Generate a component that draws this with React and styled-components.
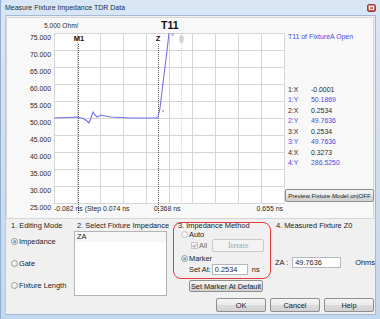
import React from 'react'
import styled, { createGlobalStyle } from 'styled-components'

const GlobalStyle = createGlobalStyle`
  html, body { margin: 0; padding: 0; overflow: hidden; background: #fff; }
  * { box-sizing: border-box; }
`

const ui = `"Liberation Sans", Arial, sans-serif`

const Window = styled.div`
  width: 380px;
  height: 319px;
  display: flex;
  flex-direction: column;
  padding: 0 4px 4px 4px;
  background: linear-gradient(#d9e6f5, #c3d7ee);
  border-left: 1px solid #93aed0;
  font-family: ${ui};
  color: #1b1b1b;
`

const TitleBar = styled.div`
  height: 15px;
  flex: none;
  display: flex;
  align-items: center;
  justify-content: space-between;
  font-size: 7px;
  color: #1e2f45;
`

const CloseButton = styled.div`
  width: 9px;
  height: 8px;
  border: 1px solid #9b3b32;
  border-radius: 2px;
  background: linear-gradient(#e29a8f, #c6554a);
  display: flex;
  align-items: center;
  justify-content: center;
  &::after {
    content: '';
    width: 3px;
    height: 2px;
    border: 1px solid #fbe9e6;
  }
`

const Client = styled.div`
  flex: 1;
  display: flex;
  flex-direction: column;
  background: #f0f0f0;
  border: 1px solid #a3b9d4;
  border-left-color: #b5c9e0;
`

const ChartPanel = styled.div`
  margin: 1px 1px 0 0;
  height: 202px;
  flex: none;
  display: flex;
  border: 1px solid #d6d6d6;
  background: #f8f8f8;
`

const InfoColumn = styled.div`
  flex: 1;
  display: flex;
  flex-direction: column;
  font-size: 6.9px;
  line-height: 10px;
`

const InfoTitle = styled.div`
  height: 10px;
  margin: 14px 0 0 3px;
  color: #4a4ae8;
  white-space: nowrap;
`

const Readouts = styled.div`
  margin: 43px 0 0 3px;
  display: flex;
  flex-direction: column;
`

const ReadoutGroup = styled.div`
  height: 21px;
  flex: none;
  display: flex;
  flex-direction: column;
`

const ReadoutRow = styled.div`
  height: ${p => (p.$blue ? 10 : 9.5)}px;
  line-height: ${p => (p.$blue ? 10 : 9.5)}px;
  display: grid;
  grid-template-columns: 23px 1fr;
  color: ${p => (p.$blue ? '#4a4ae8' : '#2a2a2a')};
`

const Button = styled.button`
  font-family: ${p => (p.$serif ? '"Liberation Serif", serif' : ui)};
  font-size: ${p => p.$size || '7.4px'};
  color: ${p => (p.disabled ? '#a3a3a3' : '#1b1b1b')};
  height: ${p => p.$h || '14px'};
  width: ${p => p.$w || '50px'};
  flex: none;
  padding: 0;
  border: 1px solid ${p => (p.disabled ? '#c9c9c9' : '#8e8e8e')};
  border-radius: 2px;
  background: ${p => (p.disabled ? '#f3f3f3' : 'linear-gradient(#f6f6f6 0%, #e9e9e9 50%, #dcdcdc 51%, #d2d2d2 100%)')};
  white-space: nowrap;
  display: flex;
  align-items: center;
  justify-content: center;
`

const PreviewButton = styled(Button)`
  margin: 20px 0 0 0;
`

const DefaultButton = styled(Button)`
  margin: 1px 0 0 16px;
`

const Bottom = styled.div`
  height: 78px;
  flex: none;
  display: grid;
  grid-template-columns: 65px 102px 98px 1fr;
  font-size: 7.4px;
`

const Group = styled.div`
  display: flex;
  flex-direction: column;
  padding-top: 2px;
`

const GroupTitle = styled.div`
  line-height: 10px;
  padding-left: ${p => p.$indent || 5}px;
  white-space: nowrap;
`

const RadioList = styled.div`
  margin-top: 5px;
  display: flex;
  flex-direction: column;
  gap: 12px;
  padding-left: 5px;
`

const OptionRow = styled.label`
  display: flex;
  align-items: center;
  height: ${p => p.$h || 10}px;
  margin-top: ${p => p.$mt || 0}px;
  padding-left: ${p => p.$indent || 0}px;
  color: ${p => (p.$dim ? '#6e6e6e' : 'inherit')};
  white-space: nowrap;
`

const Radio = styled.span`
  width: 7px;
  height: 7px;
  margin-right: 1px;
  border-radius: 50%;
  border: 1px solid ${p => (p.$disabled ? '#c5c5c5' : '#9a9a9a')};
  background: ${p => (p.$disabled ? '#f4f4f4' : 'radial-gradient(circle at 40% 35%, #ffffff, #dedede)')};
  display: flex;
  align-items: center;
  justify-content: center;
  &::after {
    content: '';
    display: ${p => (p.$checked ? 'block' : 'none')};
    width: 3px;
    height: 3px;
    border-radius: 50%;
    background: radial-gradient(circle at 35% 35%, #8fd0f5, #1e6fb8);
  }
`

const Check = styled.span`
  width: 7px;
  height: 7px;
  margin-right: 1px;
  border: 1px solid #c6c6c6;
  background: #f4f4f4;
  display: flex;
  align-items: center;
  justify-content: center;
  &::after {
    content: '';
    width: 1.5px;
    height: 3px;
    margin-top: -1px;
    border: solid #a9a9a9;
    border-width: 0 1px 1px 0;
    transform: rotate(40deg);
  }
`

const ListBox = styled.div`
  margin: 0 0 0 3px;
  width: 93px;
  height: 65px;
  background: #fff;
  border: 1px solid #b4b4b4;
`

const ListItem = styled.div`
  height: 10px;
  line-height: 10px;
  padding-left: 2px;
  background: #f6f6f6;
`

const MethodBox = styled.div`
  margin-top: 1px;
  height: 57px;
  border: 1px solid #e23a3a;
  border-radius: 8px;
  display: flex;
  flex-direction: column;
`

const MethodTitle = styled.div`
  line-height: 8px;
  margin-top: -1px;
  padding-left: 4px;
  white-space: nowrap;
`

const TextBox = styled.div`
  width: ${p => p.$w}px;
  height: 11px;
  margin-left: ${p => p.$ml || 0}px;
  margin-right: ${p => p.$mr || 0}px;
  padding-left: 2px;
  line-height: 9px;
  color: #1b1b1b;
  background: #fff;
  border: 1px solid #b5b8c0;
`

const ButtonRow = styled.div`
  margin-top: 1px;
  display: flex;
  justify-content: flex-end;
  gap: 4px;
  padding-right: 1px;
`

const px = 47
const py = 15
const cw = 23
const rh = 17

const curve = [
  [47, 100], [71, 99], [77, 101], [80, 103], [82, 105], [84, 100], [86, 94],
  [88, 97], [90, 99], [94, 97], [98, 98], [104, 99], [124, 100], [149, 100],
  [151, 99], [153, 90], [157, 57], [160, 33], [162, 15]
]

const yLabels = ['75.000', '70.000', '65.000', '60.000', '55.000', '50.000', '45.000', '40.000', '35.000', '30.000', '25.000']

const Chart = () => (
  <svg width="278" height="200" style={{ display: 'block', flex: 'none' }} fontFamily="Liberation Sans, Arial, sans-serif">
    <rect x={px} y={py} width={230} height={170} fill="#fff" />
    {Array.from({ length: 11 }, (_, i) => (
      <line key={'v' + i} x1={px + i * cw + 0.5} y1={py} x2={px + i * cw + 0.5} y2={py + 170} stroke="#d6d6d6" />
    ))}
    {Array.from({ length: 11 }, (_, i) => (
      <line key={'h' + i} x1={px} y1={py + i * rh + 0.5} x2={px + 230} y2={py + i * rh + 0.5} stroke="#d6d6d6" />
    ))}
    {yLabels.map((t, i) => (
      <text key={t} x={44} y={py + i * rh + 7} fontSize="6.9" textAnchor="end" fill="#2a2a2a">{t}</text>
    ))}
    <text x={37} y={10} fontSize="6.6" fill="#2a2a2a">5.000 Ohm/</text>
    <text x={154} y={11} fontSize="10.5" fontWeight="bold" fill="#111">T11</text>
    <line x1={174.5} y1={py} x2={174.5} y2={py + 170} stroke="#c8c8c8" strokeDasharray="1 1.5" />
    <ellipse cx={174.5} cy={21} rx={2.3} ry={4} fill="#d2d2d2" />
    <line x1={71.5} y1={26} x2={71.5} y2={195} stroke="#555" strokeDasharray="1 1" />
    <line x1={151.5} y1={26} x2={151.5} y2={195} stroke="#555" strokeDasharray="1 1" />
    <text x={72} y={23} fontSize="7.5" fontWeight="bold" textAnchor="middle" fill="#111">M1</text>
    <text x={151} y={23} fontSize="7.5" fontWeight="bold" textAnchor="middle" fill="#111">Z</text>
    <polygon points="154,93 157,91.5 157,94.5" fill="#bbb" />
    <polyline points={curve.map(p => p.join(',')).join(' ')} fill="none" stroke="#7272f0" strokeWidth="1.1" />
    <text x={164} y={18} fontSize="6" fill="#6a6ae8">v</text>
    <text x={47} y={193} fontSize="6.9" fill="#2a2a2a">-0.082 ns (Step 0.074 ns</text>
    <text x={147} y={193} fontSize="6.9" fill="#2a2a2a">0.368 ns</text>
    <text x={276} y={193} fontSize="6.9" textAnchor="end" fill="#2a2a2a">0.655 ns</text>
  </svg>
)

const markers = [
  ['1', '-0.0001', '50.1869'],
  ['2', '0.2534', '49.7636'],
  ['3', '0.2534', '49.7636'],
  ['4', '0.3273', '286.5250']
]

export default function App() {
  return (
    <>
      <GlobalStyle />
      <Window>
        <TitleBar>
          <span>Measure Fixture Impedance TDR Data</span>
          <CloseButton />
        </TitleBar>
        <Client>
          <ChartPanel>
            <Chart />
            <InfoColumn>
              <InfoTitle>T11 of FixtureA Open</InfoTitle>
              <Readouts>
                {markers.map(([n, x, y]) => (
                  <ReadoutGroup key={n}>
                    <ReadoutRow><span>{n}:X</span><span>{x}</span></ReadoutRow>
                    <ReadoutRow $blue><span>{n}:Y</span><span>{y}</span></ReadoutRow>
                  </ReadoutGroup>
                ))}
              </Readouts>
              <PreviewButton $w="89px" $h="13px" $size="6.1px">Preview Fixture Model on|OFF</PreviewButton>
            </InfoColumn>
          </ChartPanel>
          <Bottom>
            <Group>
              <GroupTitle>1. Editing Mode</GroupTitle>
              <RadioList>
                <OptionRow><Radio $checked />Impedance</OptionRow>
                <OptionRow><Radio />Gate</OptionRow>
                <OptionRow><Radio />Fixture Length</OptionRow>
              </RadioList>
            </Group>
            <Group>
              <GroupTitle $indent={6}>2. Select Fixture Impedance</GroupTitle>
              <ListBox>
                <ListItem>ZA</ListItem>
              </ListBox>
            </Group>
            <Group>
              <MethodBox>
                <MethodTitle>3. Impedance Method</MethodTitle>
                <OptionRow $h={9} $indent={7}><Radio $disabled />Auto</OptionRow>
                <OptionRow $h={13} $indent={17} $dim>
                  <Check />All
                  <Button disabled $serif $w="52px" $h="13px" $size="8px" style={{ marginLeft: 5 }}>Iterate</Button>
                </OptionRow>
                <OptionRow $h={9} $mt={2} $indent={7}><Radio $checked />Marker</OptionRow>
                <OptionRow $h={11} $mt={1} $indent={15}>
                  Set At:
                  <TextBox $w={36} $ml={1} $mr={4}>0.2534</TextBox>
                  ns
                </OptionRow>
              </MethodBox>
              <DefaultButton $w="74px" $h="12px">Set Marker At Default</DefaultButton>
            </Group>
            <Group>
              <GroupTitle $indent={5}>4. Measured Fixture Z0</GroupTitle>
              <OptionRow $h={11} $mt={26} $indent={4}>
                ZA :
                <TextBox $w={49} $ml={4} $mr={14}>49.7636</TextBox>
                Ohms
              </OptionRow>
            </Group>
          </Bottom>
          <ButtonRow>
            <Button>OK</Button>
            <Button>Cancel</Button>
            <Button>Help</Button>
          </ButtonRow>
        </Client>
      </Window>
    </>
  )
}
